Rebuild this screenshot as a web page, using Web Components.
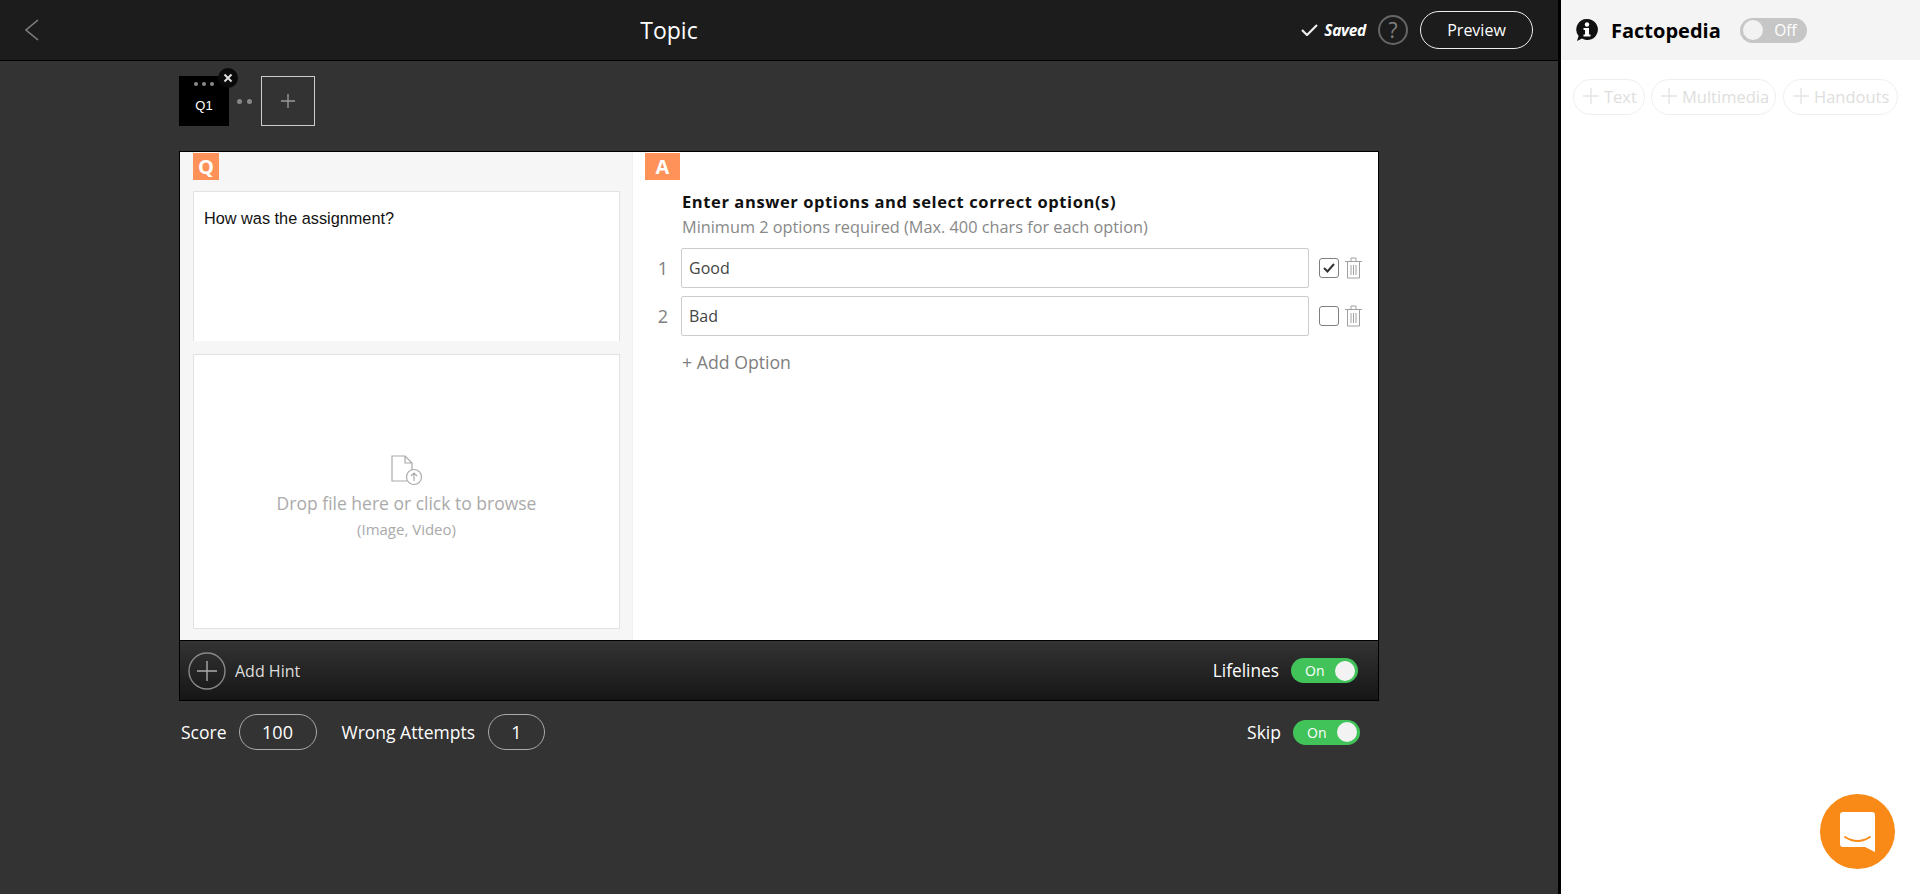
<!DOCTYPE html>
<html>
<head>
<meta charset="utf-8">
<title>Topic</title>
<style>
    html, body { margin: 0; height: 100%; }
    body {
        display: flex;
        height: 894px;
        overflow: hidden;
        font-family: 'Open Sans', sans-serif;
        background: #fff;
    }
</style>
</head>
<body>
<quiz-editor>
    <top-bar></top-bar>
    <slide-tabs></slide-tabs>
    <question-card></question-card>
    <score-row></score-row>
</quiz-editor>
<fact-panel></fact-panel>
<chat-fab></chat-fab>

<script>
class QuizEditor extends HTMLElement {
    constructor() {
        super();
        this.shadowDOM = this.attachShadow({mode: "open"});
        this.shadowDOM.innerHTML = `
        <style>
            :host {
                display: block;
                flex: 0 0 1558px;
                height: 894px;
                background: #333;
                border-right: 3px solid #000;
            }
        </style>
        <slot></slot>
        `;
    }
}

class TopBar extends HTMLElement {
    constructor() {
        super();
        this.shadowDOM = this.attachShadow({mode: "open"});
        this.shadowDOM.innerHTML = `
        <style>
            :host {
                display: flex;
                align-items: center;
                height: 60px;
                border-bottom: 1px solid #000;
                background: #1c1c1c;
                color: #fff;
                padding: 0 25px 0 24px;
            }
            .back { display: block; flex: none; }
            .title {
                flex: none;
                width: 1258px;
                text-align: center;
                font-size: 23px;
            }
            .saved {
                margin-left: auto;
                display: flex;
                align-items: center;
                gap: 6px;
                font-size: 15.5px;
                font-weight: 700;
                font-style: italic;
                letter-spacing: -0.3px;
            }
            .help {
                display: flex;
                align-items: center;
                justify-content: center;
                box-sizing: border-box;
                width: 30px;
                height: 30px;
                margin-left: 12px;
                border: 2px solid #666;
                border-radius: 50%;
                color: #808080;
                font-size: 21px;
            }
            .preview {
                display: flex;
                align-items: center;
                justify-content: center;
                box-sizing: border-box;
                width: 113px;
                height: 38px;
                margin-left: 12px;
                border: 1px solid #eee;
                border-radius: 19px;
                font-size: 16px;
            }
        </style>
        <svg class="back" width="16" height="22" viewBox="0 0 16 22" fill="none" stroke="#808080" stroke-width="1.6"><path d="M14 1 L2 11 L14 21"/></svg>
        <div class="title">Topic</div>
        <div class="saved">
            <svg width="17" height="12" viewBox="0 0 17 12" fill="none" stroke="#eee" stroke-width="2.2"><path d="M1 6 L6 11 L16 1"/></svg>
            <span>Saved</span>
        </div>
        <div class="help">?</div>
        <div class="preview">Preview</div>
        `;
    }
}

class SlideTabs extends HTMLElement {
    constructor() {
        super();
        this.shadowDOM = this.attachShadow({mode: "open"});
        this.shadowDOM.innerHTML = `
        <style>
            :host {
                display: flex;
                align-items: center;
                height: 50px;
                padding: 15px 0 25px 179px;
                color: #fff;
            }
            .tile {
                position: relative;
                width: 50px;
                height: 50px;
                background: #000;
                display: flex;
                flex-direction: column;
                align-items: center;
            }
            .grip { display: flex; gap: 4px; margin-top: 6px; }
            .grip i { width: 4px; height: 4px; border-radius: 50%; background: #888; }
            .name { font: 13px 'Liberation Sans', sans-serif; margin-top: 12px; }
            .close {
                position: absolute;
                top: -8px;
                right: -9px;
                width: 20px;
                height: 20px;
                border-radius: 50%;
                background: #0a0a0a;
            }
            .close svg { display: block; margin: 4px; }
            .dots { display: flex; gap: 5px; margin: 0 9px 0 8px; }
            .dots i { width: 5px; height: 5px; border-radius: 50%; background: #888; }
            .add {
                box-sizing: border-box;
                width: 54px;
                height: 50px;
                border: 1px solid #ccc;
                display: flex;
                align-items: center;
                justify-content: center;
            }
        </style>
        <div class="tile">
            <div class="grip"><i></i><i></i><i></i></div>
            <div class="name">Q1</div>
            <div class="close"><svg width="12" height="12" viewBox="0 0 12 12" stroke="#ddd" stroke-width="2"><path d="M2.5 2.5 L9.5 9.5 M9.5 2.5 L2.5 9.5"/></svg></div>
        </div>
        <div class="dots"><i></i><i></i></div>
        <div class="add"><svg width="14" height="14" viewBox="0 0 14 14" stroke="#999" stroke-width="1.4"><path d="M0 7 H14 M7 0 V14"/></svg></div>
        `;
    }
}

class QuestionCard extends HTMLElement {
    constructor() {
        super();
        this.shadowDOM = this.attachShadow({mode: "open"});
        this.shadowDOM.innerHTML = `
        <style>
            :host {
                display: block;
                box-sizing: border-box;
                width: 1200px;
                height: 550px;
                margin-left: 179px;
                border: 1px solid #000;
                background: #fff;
            }
            .body { display: flex; height: 488px; }
            .left {
                box-sizing: border-box;
                width: 453px;
                background: #f6f6f6;
                padding: 1px 12px 0 13px;
                border-right: 1px solid #f0f0f0;
            }
            .right { flex: 1; padding: 1px 0 0 12px; }
            .badge {
                width: 26px;
                height: 27px;
                background: #ff9259;
                color: #fff;
                font: 700 20px/27px 'Open Sans', sans-serif;
                text-align: center;
            }
            .badge.a { width: 35px; }
            .question {
                box-sizing: border-box;
                height: 150px;
                margin-top: 11px;
                padding: 17px 10px;
                background: #fff;
                border: 1px solid #e2e2e2;
                border-bottom: 0;
                font: 16.3px 'Liberation Sans', sans-serif;
                color: #111;
            }
            .drop {
                box-sizing: border-box;
                height: 275px;
                margin-top: 13px;
                background: #fff;
                border: 1px solid #e2e2e2;
                display: flex;
                flex-direction: column;
                align-items: center;
                color: #aaa;
                font-size: 17.5px;
            }
            .drop svg { margin-top: 100px; }
            .drop div { margin-top: 5px; }
            .drop small { font-size: 15px; margin-top: 4px; }
            .head { font-weight: 700; font-size: 16.5px; letter-spacing: 0.6px; color: #111; margin: 12px 0 0 37px; line-height: 20px; }
            .sub { font-size: 16.3px; color: #888; margin: 5px 0 0 37px; line-height: 20px; }
            .options { margin-top: 11px; display: flex; flex-direction: column; gap: 8px; }
            .add {
                margin: 14px 0 0 37px;
                font-size: 17.7px;
                color: #808080;
            }
            .bar {
                box-sizing: border-box;
                height: 60px;
                border-top: 1px solid #000;
                background: linear-gradient(#333, #161616);
                display: flex;
                align-items: center;
                padding: 0 20px 0 8px;
                color: #eee;
            }
            .hint { font-size: 16px; margin-left: 9px; color: #ddd; }
            .life { margin-left: auto; font-size: 17.3px; margin-right: 12px; color: #fff; }
        </style>
        <div class="body">
            <div class="left">
                <div class="badge">Q</div>
                <div class="question">How was the assignment?</div>
                <div class="drop">
                    <svg width="32" height="31" viewBox="0 0 32 31" fill="none" stroke="#aaa" stroke-width="1.2">
                        <path d="M16 26 H1 V1 H14 L21 8 V15 M14 1 V8 H21"/>
                        <circle cx="23" cy="22" r="7.5"/>
                        <path d="M23 26 V18 M20 21 L23 18 L26 21"/>
                    </svg>
                    <div>Drop file here or click to browse</div>
                    <small>(Image, Video)</small>
                </div>
            </div>
            <div class="right">
                <div class="badge a">A</div>
                <div class="head">Enter answer options and select correct option(s)</div>
                <div class="sub">Minimum 2 options required (Max. 400 chars for each option)</div>
                <div class="options">
                    <option-row num="1" text="Good" checked></option-row>
                    <option-row num="2" text="Bad"></option-row>
                </div>
                <div class="add">+ Add Option</div>
            </div>
        </div>
        <div class="bar">
            <svg width="38" height="38" viewBox="0 0 38 38" fill="none" stroke="#888" stroke-width="1.4"><circle cx="19" cy="19" r="18"/><path d="M9 19 H29 M19 9 V29" stroke="#aaa"/></svg>
            <span class="hint">Add Hint</span>
            <span class="life">Lifelines</span>
            <toggle-switch state="on"></toggle-switch>
        </div>
        `;
    }
}

class OptionRow extends HTMLElement {
    connectedCallback() {
        if (this.shadowDOM) return;
        this.shadowDOM = this.attachShadow({mode: "open"});
        const tick = this.hasAttribute('checked')
            ? '<svg width="14" height="12" viewBox="0 0 14 12" fill="none" stroke="#333" stroke-width="2"><path d="M2 6 L5.5 9.5 L12 2"/></svg>'
            : '';
        this.shadowDOM.innerHTML = `
        <style>
            :host { display: flex; align-items: center; height: 40px; }
            .num { width: 36px; font-size: 18px; color: #808080; text-align: right; padding-right: 13px; box-sizing: border-box; }
            .field {
                box-sizing: border-box;
                width: 628px;
                height: 40px;
                padding: 0 7px;
                display: flex;
                align-items: center;
                border: 1px solid #ccc;
                border-radius: 2px;
                font-size: 16px;
                color: #444;
            }
            .check {
                box-sizing: border-box;
                width: 20px;
                height: 20px;
                margin-left: 10px;
                border: 1.5px solid #808080;
                border-radius: 3px;
                display: flex;
                align-items: center;
                justify-content: center;
            }
            .trash { margin-left: 6px; display: block; }
        </style>
        <div class="num">${this.getAttribute('num')}</div>
        <div class="field">${this.getAttribute('text')}</div>
        <div class="check">${tick}</div>
        <svg class="trash" width="17" height="22" viewBox="0 0 17 22" fill="none" stroke="#a0a0a0" stroke-width="1"><path d="M0 4.5 H17 M6 4.5 V1 H11 V4.5 M2.5 4.5 V21 H14.5 V4.5 M6 8 V18 M8.5 8 V18 M11 8 V18"/></svg>
        `;
    }
}

class ToggleSwitch extends HTMLElement {
    connectedCallback() {
        if (this.shadowDOM) return;
        this.shadowDOM = this.attachShadow({mode: "open"});
        const on = this.getAttribute('state') === 'on';
        this.shadowDOM.innerHTML = `
        <style>
            :host {
                display: flex;
                flex: none;
                align-items: center;
                justify-content: space-between;
                flex-direction: ${on ? 'row' : 'row-reverse'};
                box-sizing: border-box;
                width: 67px;
                height: 25px;
                padding: 0 3px 0 ${on ? '14px' : '3px'};
                border-radius: 13px;
                background: ${on ? '#41c35a' : '#c6c6c6'};
                color: #fff;
                font-size: ${on ? '14px' : '15.5px'};
            }
            span { ${on ? '' : 'margin-right: 7px;'} }
            i { width: 20px; height: 20px; border-radius: 50%; background: #f2f2f2; }
        </style>
        <span>${on ? 'On' : 'Off'}</span><i></i>
        `;
    }
}

class ScoreRow extends HTMLElement {
    constructor() {
        super();
        this.shadowDOM = this.attachShadow({mode: "open"});
        this.shadowDOM.innerHTML = `
        <style>
            :host {
                display: flex;
                align-items: center;
                box-sizing: border-box;
                width: 1179px;
                height: 36px;
                margin: 13px 0 0 181px;
                color: #fff;
                font-size: 17.5px;
            }
            .pill {
                box-sizing: border-box;
                height: 36px;
                border: 1px solid #aaa;
                border-radius: 18px;
                display: flex;
                align-items: center;
                justify-content: center;
                font-size: 18px;
            }
            .score { width: 78px; margin: 0 25px 0 12px; }
            .wrong { width: 57px; margin-left: 13px; }
            .skip { margin: 0 12px 0 auto; }
        </style>
        <span>Score</span><div class="pill score">100</div>
        <span>Wrong Attempts</span><div class="pill wrong">1</div>
        <span class="skip">Skip</span>
        <toggle-switch state="on"></toggle-switch>
        `;
    }
}

class FactPanel extends HTMLElement {
    constructor() {
        super();
        this.shadowDOM = this.attachShadow({mode: "open"});
        this.shadowDOM.innerHTML = `
        <style>
            :host { display: block; flex: 1; background: #fff; }
            .head {
                display: flex;
                align-items: center;
                height: 60px;
                background: #f4f4f4;
                padding-left: 14px;
            }
            .title { font-size: 20px; font-weight: 700; color: #000; margin-left: 12px; }
            toggle-switch { margin-left: 19px; }
            .btns { display: flex; gap: 6px; padding: 19px 0 0 12px; }
            .btn {
                box-sizing: border-box;
                height: 36px;
                padding: 0 0 2px 9px;
                display: flex;
                align-items: center;
                gap: 5px;
                border: 1px solid #efefef;
                border-radius: 18px;
                color: #dedede;
                font-size: 16.5px;
            }
        </style>
        <div class="head">
            <svg width="24" height="24" viewBox="0 0 24 24"><path d="M12 1 A10.5 10.5 0 1 1 7 20.5 L2 23 L3.6 18 A10.5 10.5 0 0 1 12 1 Z" fill="#111"/><circle cx="12" cy="6.5" r="2.2" fill="#fff"/><path d="M8.5 10 H14 V16.5 H15.5 V18.5 H8.5 V16.5 H10 V12 H8.5 Z" fill="#fff"/></svg>
            <span class="title">Factopedia</span>
            <toggle-switch state="off"></toggle-switch>
        </div>
        <div class="btns">
            <div class="btn" style="width:72px"><svg width="16" height="16" viewBox="0 0 16 16" stroke="#e4e4e4" stroke-width="1.4"><path d="M0 8 H16 M8 0 V16"/></svg>Text</div>
            <div class="btn" style="width:125px"><svg width="16" height="16" viewBox="0 0 16 16" stroke="#e4e4e4" stroke-width="1.4"><path d="M0 8 H16 M8 0 V16"/></svg>Multimedia</div>
            <div class="btn" style="width:115px;margin-left:1px"><svg width="16" height="16" viewBox="0 0 16 16" stroke="#e4e4e4" stroke-width="1.4"><path d="M0 8 H16 M8 0 V16"/></svg>Handouts</div>
        </div>
        `;
    }
}

class ChatFab extends HTMLElement {
    constructor() {
        super();
        this.shadowDOM = this.attachShadow({mode: "open"});
        this.shadowDOM.innerHTML = `
        <style>
            :host {
                position: fixed;
                left: 1820px;
                top: 794px;
                width: 75px;
                height: 75px;
                border-radius: 50%;
                background: #f98a17;
                display: flex;
                align-items: center;
                justify-content: center;
            }
        </style>
        <svg width="35" height="40" viewBox="0 0 35 40"><path d="M3 0 H32 A3 3 0 0 1 35 3 V40 L25 35 H3 A3 3 0 0 1 0 32 V3 A3 3 0 0 1 3 0 Z" fill="#fff"/><path d="M5 25 Q17.5 33 30 25" fill="none" stroke="#f98a17" stroke-width="2" stroke-linecap="round"/></svg>
        `;
    }
}

customElements.define('quiz-editor', QuizEditor);
customElements.define('top-bar', TopBar);
customElements.define('slide-tabs', SlideTabs);
customElements.define('question-card', QuestionCard);
customElements.define('option-row', OptionRow);
customElements.define('toggle-switch', ToggleSwitch);
customElements.define('score-row', ScoreRow);
customElements.define('fact-panel', FactPanel);
customElements.define('chat-fab', ChatFab);
</script>
</body>
</html>
